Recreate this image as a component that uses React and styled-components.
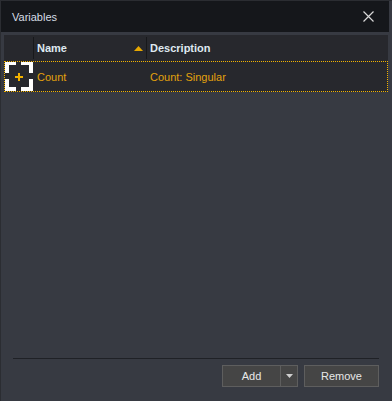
import styled, { createGlobalStyle } from "styled-components";

const GlobalStyle = createGlobalStyle`
  html, body {
    margin: 0;
    padding: 0;
    background: #373a42;
  }
  body {
    font-family: "Liberation Sans", Arial, sans-serif;
    font-size: 11px;
  }
`;

const Window = styled.div`
  width: 392px;
  height: 401px;
  box-sizing: border-box;
  border-left: 1px solid #2b2d32;
  border-top: 1px solid #2b2d32;
  display: flex;
  flex-direction: column;
  background: #373a42;
`;

const TitleBar = styled.div`
  height: 31px;
  margin-right: 3px;
  background: #15171b;
  display: flex;
  align-items: center;
  justify-content: space-between;
  padding: 0 15px 0 11px;
  color: #d6dde6;
`;

const Title = styled.span`
  font-size: 11px;
`;

const CloseButton = styled.div`
  width: 11px;
  height: 11px;
  display: flex;
  cursor: pointer;
`;

const Grid = styled.div`
  flex: 1;
  margin: 3px 4px 0 3px;
  display: flex;
  flex-direction: column;
`;

const HeaderRow = styled.div`
  height: 26px;
  background: #27282d;
  display: grid;
  grid-template-columns: 29px 113px 1fr;
`;

const HeaderCell = styled.div`
  margin: 2px 0;
  border-left: ${(props) => (props.first ? "none" : "1px solid #17181b")};
  padding: 0 3px;
  display: flex;
  align-items: center;
  justify-content: space-between;
  color: #dfe8f0;
  font-weight: 700;
`;

const DataRow = styled.div`
  height: 29px;
  background: #27282d;
  border: 1px dotted #f3b300;
  display: grid;
  grid-template-columns: 28px 113px 1fr;
`;

const Cell = styled.div`
  display: flex;
  align-items: center;
  padding-left: ${(props) => (props.flush ? "0" : "4px")};
  color: #e3a20c;
`;

const Footer = styled.div`
  margin: 0 13px 14px 12px;
  border-top: 1px solid #1f2126;
  padding-top: 6px;
  display: flex;
  justify-content: flex-end;
  gap: 6px;
`;

const ButtonGroup = styled.div`
  display: flex;
`;

const Button = styled.button`
  height: 22px;
  width: ${(props) => props.width};
  box-sizing: border-box;
  background: #454545;
  border: 1px solid #5e5e5e;
  margin-left: ${(props) => (props.joined ? "-1px" : "0")};
  color: #e8e8e8;
  font-family: "Liberation Sans", Arial, sans-serif;
  font-size: 11px;
  padding: 0;
  display: flex;
  align-items: center;
  justify-content: center;
  cursor: pointer;
`;

const PlusBox = () => (
  <svg width="28" height="29" viewBox="0 0 28 29">
    <g fill="#ffffff">
      <rect x="0" y="0" width="11" height="3" />
      <rect x="16" y="0" width="12" height="3" />
      <rect x="0" y="25" width="11" height="4" />
      <rect x="16" y="25" width="12" height="4" />
      <rect x="0" y="0" width="4" height="11" />
      <rect x="0" y="17" width="4" height="12" />
      <rect x="24" y="0" width="4" height="11" />
      <rect x="24" y="17" width="4" height="12" />
    </g>
    <g fill="#f0b000">
      <rect x="10" y="14" width="8" height="2" />
      <rect x="13" y="11" width="2" height="8" />
    </g>
  </svg>
);

const App = () => {
  return (
    <>
      <GlobalStyle />
      <Window>
        <TitleBar>
          <Title>Variables</Title>
          <CloseButton>
            <svg width="11" height="11" viewBox="0 0 11 11">
              <path
                d="M0.5 0.5 L10.5 10.5 M10.5 0.5 L0.5 10.5"
                stroke="#d8d8d8"
                strokeWidth="1.2"
              />
            </svg>
          </CloseButton>
        </TitleBar>
        <Grid>
          <HeaderRow>
            <HeaderCell first />
            <HeaderCell>
              Name
              <svg width="9" height="5" viewBox="0 0 9 5">
                <path d="M0 5 L4.5 0 L9 5 Z" fill="#e8a800" />
              </svg>
            </HeaderCell>
            <HeaderCell>Description</HeaderCell>
          </HeaderRow>
          <DataRow>
            <Cell flush>
              <PlusBox />
            </Cell>
            <Cell>Count</Cell>
            <Cell>Count: Singular</Cell>
          </DataRow>
        </Grid>
        <Footer>
          <ButtonGroup>
            <Button width="59px">Add</Button>
            <Button width="18px" joined>
              <svg width="7" height="4" viewBox="0 0 7 4">
                <path d="M0 0 L7 0 L3.5 4 Z" fill="#cfcfcf" />
              </svg>
            </Button>
          </ButtonGroup>
          <Button width="75px">Remove</Button>
        </Footer>
      </Window>
    </>
  );
};

export default App;
